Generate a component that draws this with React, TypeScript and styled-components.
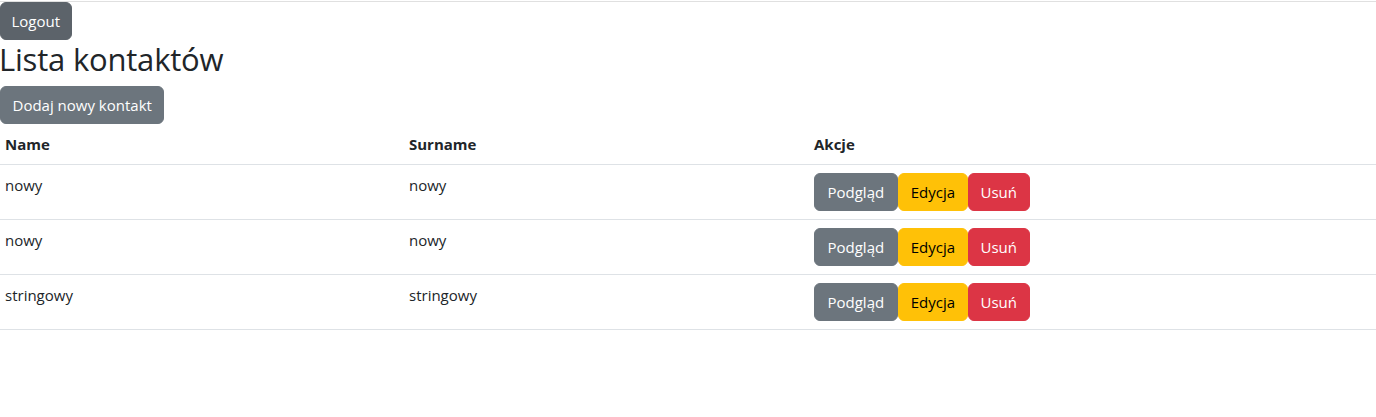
import React from "react";
import styled, { createGlobalStyle } from "styled-components";

const GlobalStyle = createGlobalStyle`
  html, body {
    margin: 0;
    padding: 0;
    background: #ffffff;
  }
  body {
    font-family: "Open Sans", "Noto Sans", "Liberation Sans", sans-serif;
    font-size: 16px;
    line-height: 1.5;
    color: #212529;
  }
  * { box-sizing: border-box; }
`;

const Page = styled.div`
  display: flex;
  flex-direction: column;
  align-items: flex-start;
  padding-top: 1px;
`;

const TopRule = styled.div`
  align-self: stretch;
  height: 1px;
  background: #e0e0e0;
`;

type Variant = "secondary" | "dark" | "warning" | "danger";

const colors: Record<Variant, { bg: string; fg: string }> = {
  secondary: { bg: "#6c757d", fg: "#ffffff" },
  dark: { bg: "#5c636a", fg: "#ffffff" },
  warning: { bg: "#ffc107", fg: "#000000" },
  danger: { bg: "#dc3545", fg: "#ffffff" },
};

const Button = styled.button<{ $variant: Variant; $px?: number }>`
  display: inline-block;
  font-family: inherit;
  font-size: 15px;
  line-height: 24px;
  height: 38px;
  padding: 6px ${(p) => p.$px ?? 12}px;
  border: 1px solid ${(p) => colors[p.$variant].bg};
  border-radius: 6px;
  background: ${(p) => colors[p.$variant].bg};
  color: ${(p) => colors[p.$variant].fg};
  cursor: pointer;
  white-space: nowrap;
`;

const Title = styled.h2`
  margin: 0 0 8px -1px;
  font-size: 31px;
  font-weight: 500;
  letter-spacing: -0.2px;
  line-height: 38px;
  color: #212529;
`;

const Table = styled.table`
  width: 100%;
  border-collapse: collapse;
  table-layout: fixed;
`;

const HeadCell = styled.th`
  text-align: left;
  font-weight: 700;
  font-size: 15px;
  padding: 8px 5px;
  line-height: 24px;
  border-bottom: 1px solid #dee2e6;
`;

const Cell = styled.td`
  vertical-align: top;
  font-size: 15px;
  padding: 8px 5px;
  line-height: 24px;
  border-bottom: 1px solid #dee2e6;
`;

const Actions = styled.div`
  display: flex;
`;

const contacts = [
  { name: "nowy", surname: "nowy" },
  { name: "nowy", surname: "nowy" },
  { name: "stringowy", surname: "stringowy" },
];

export default function App() {
  return (
    <>
      <GlobalStyle />
      <Page>
        <TopRule />
        <Button $variant="dark" $px={10.5}>Logout</Button>
        <Title>Lista kontaktów</Title>
        <Button $variant="secondary" $px={11.5}>Dodaj nowy kontakt</Button>
        <Table>
          <colgroup>
            <col style={{ width: "404px" }} />
            <col style={{ width: "405px" }} />
            <col />
          </colgroup>
          <thead>
            <tr>
              <HeadCell>Name</HeadCell>
              <HeadCell>Surname</HeadCell>
              <HeadCell>Akcje</HeadCell>
            </tr>
          </thead>
          <tbody>
            {contacts.map((c, i) => (
              <tr key={i}>
                <Cell>{c.name}</Cell>
                <Cell>{c.surname}</Cell>
                <Cell>
                  <Actions>
                    <Button $variant="secondary" $px={12.5}>Podgląd</Button>
                    <Button $variant="warning">Edycja</Button>
                    <Button $variant="danger" $px={11.5}>Usuń</Button>
                  </Actions>
                </Cell>
              </tr>
            ))}
          </tbody>
        </Table>
      </Page>
    </>
  );
}
